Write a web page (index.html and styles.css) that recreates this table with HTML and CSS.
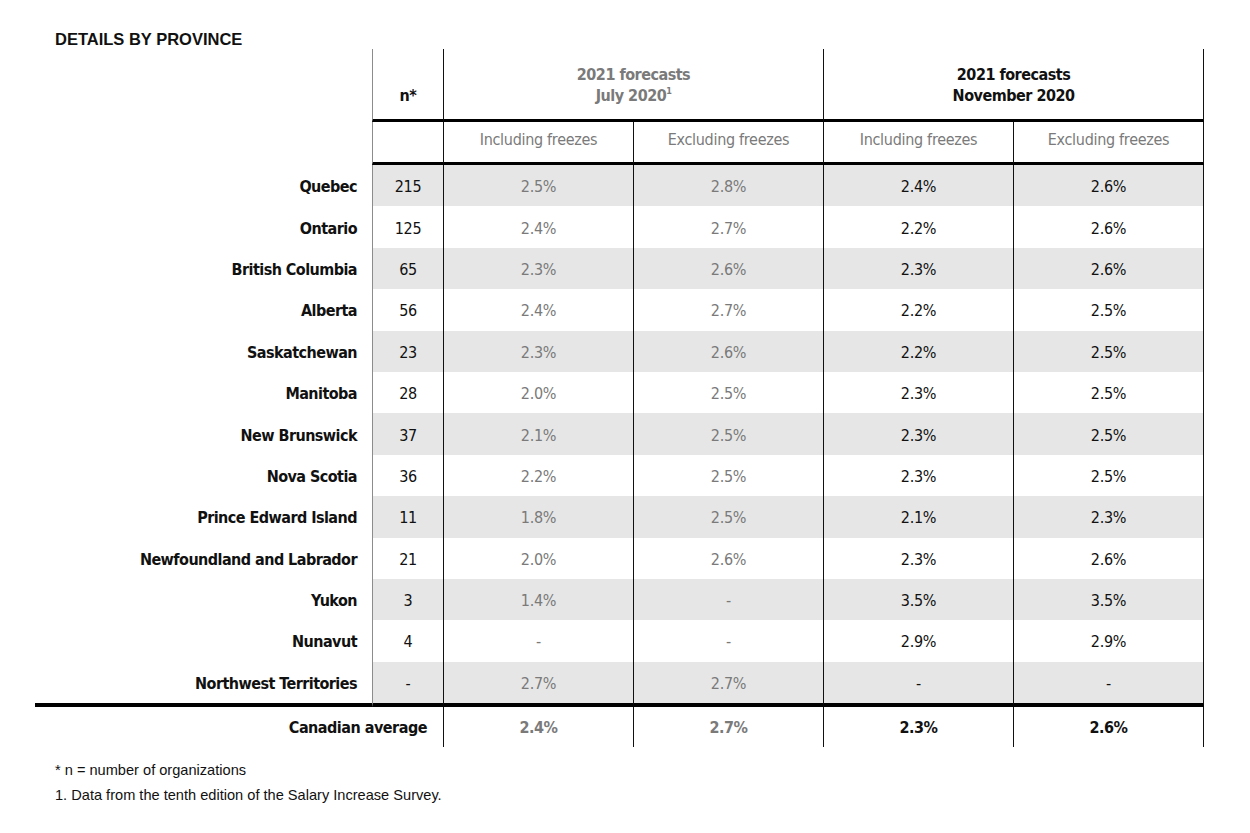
FILE: index.html
```html
<!DOCTYPE html>
<html lang="en">
<head>
<meta charset="utf-8">
<title>Details by province</title>
<link rel="stylesheet" href="styles.css">
</head>
<body>
<main class="page">
  <h1 class="title">DETAILS BY PROVINCE</h1>
  <table class="prov">
    <colgroup>
      <col class="c-label">
      <col class="c-n">
      <col class="c-val">
      <col class="c-val">
      <col class="c-val">
      <col class="c-val c-last">
    </colgroup>
    <thead>
      <tr class="h1">
        <th class="lbl"></th>
        <th class="n">n*</th>
        <th class="grp muted" colspan="2">2021 forecasts<br>July 2020<sup>1</sup></th>
        <th class="grp dark last" colspan="2">2021 forecasts<br>November 2020</th>
      </tr>
      <tr class="h2">
        <th class="lbl"></th>
        <th class="n"></th>
        <th class="sub">Including freezes</th>
        <th class="sub">Excluding freezes</th>
        <th class="sub">Including freezes</th>
        <th class="sub last">Excluding freezes</th>
      </tr>
    </thead>
    <tbody>
      <tr class="alt"><th class="lbl">Quebec</th><td class="n">215</td><td class="v muted">2.5%</td><td class="v muted">2.8%</td><td class="v">2.4%</td><td class="v last">2.6%</td></tr>
      <tr><th class="lbl">Ontario</th><td class="n">125</td><td class="v muted">2.4%</td><td class="v muted">2.7%</td><td class="v">2.2%</td><td class="v last">2.6%</td></tr>
      <tr class="alt"><th class="lbl">British Columbia</th><td class="n">65</td><td class="v muted">2.3%</td><td class="v muted">2.6%</td><td class="v">2.3%</td><td class="v last">2.6%</td></tr>
      <tr><th class="lbl">Alberta</th><td class="n">56</td><td class="v muted">2.4%</td><td class="v muted">2.7%</td><td class="v">2.2%</td><td class="v last">2.5%</td></tr>
      <tr class="alt"><th class="lbl">Saskatchewan</th><td class="n">23</td><td class="v muted">2.3%</td><td class="v muted">2.6%</td><td class="v">2.2%</td><td class="v last">2.5%</td></tr>
      <tr><th class="lbl">Manitoba</th><td class="n">28</td><td class="v muted">2.0%</td><td class="v muted">2.5%</td><td class="v">2.3%</td><td class="v last">2.5%</td></tr>
      <tr class="alt"><th class="lbl">New Brunswick</th><td class="n">37</td><td class="v muted">2.1%</td><td class="v muted">2.5%</td><td class="v">2.3%</td><td class="v last">2.5%</td></tr>
      <tr><th class="lbl">Nova Scotia</th><td class="n">36</td><td class="v muted">2.2%</td><td class="v muted">2.5%</td><td class="v">2.3%</td><td class="v last">2.5%</td></tr>
      <tr class="alt"><th class="lbl">Prince Edward Island</th><td class="n">11</td><td class="v muted">1.8%</td><td class="v muted">2.5%</td><td class="v">2.1%</td><td class="v last">2.3%</td></tr>
      <tr><th class="lbl">Newfoundland and Labrador</th><td class="n">21</td><td class="v muted">2.0%</td><td class="v muted">2.6%</td><td class="v">2.3%</td><td class="v last">2.6%</td></tr>
      <tr class="alt"><th class="lbl">Yukon</th><td class="n">3</td><td class="v muted">1.4%</td><td class="v muted">-</td><td class="v">3.5%</td><td class="v last">3.5%</td></tr>
      <tr><th class="lbl">Nunavut</th><td class="n">4</td><td class="v muted">-</td><td class="v muted">-</td><td class="v">2.9%</td><td class="v last">2.9%</td></tr>
      <tr class="alt end"><th class="lbl">Northwest Territories</th><td class="n">-</td><td class="v muted">2.7%</td><td class="v muted">2.7%</td><td class="v">-</td><td class="v last">-</td></tr>
    </tbody>
    <tfoot>
      <tr class="avg">
        <th class="avg-lbl" colspan="2">Canadian average</th>
        <td class="v muted">2.4%</td>
        <td class="v muted">2.7%</td>
        <td class="v">2.3%</td>
        <td class="v last">2.6%</td>
      </tr>
    </tfoot>
  </table>
  <div class="notes">
    <p class="note">* n = number of organizations</p>
    <p class="note">1. Data from the tenth edition of the Salary Increase Survey.</p>
  </div>
</main>
</body>
</html>
```

FILE: styles.css
```css
* { box-sizing: border-box; }

html, body {
  margin: 0;
  padding: 0;
  background: #ffffff;
}

.page {
  width: 1250px;
  height: 833px;
  padding: 30px 0 0 35px;
  font-family: "Liberation Sans", Arial, sans-serif;
  color: #111111;
}

.title {
  margin: 0 0 0 20px;
  font-size: 16.5px;
  line-height: 18px;
  font-weight: 700;
  color: #111111;
}

.prov {
  margin-top: 1px;
  width: 1169px;
  table-layout: fixed;
  border-collapse: separate;
  border-spacing: 0;
  font-family: "Liberation Sans Narrow", "DejaVu Sans Condensed", "Liberation Sans", sans-serif;
  font-size: 16px;
  line-height: 21px;
  letter-spacing: -0.3px;
}

.c-label { width: 337px; }
.c-n { width: 71px; }
.c-val { width: 190px; }
.c-last { width: 191px; }

.prov th,
.prov td {
  padding: 0;
  text-align: center;
  font-weight: 400;
  color: #111111;
}

.prov .n {
  border-left: 1px solid #8c8c8c;
}

.prov .grp,
.prov .sub,
.prov .v {
  border-left: 1px solid #111111;
}

.prov .last {
  border-right: 1px solid #111111;
}

/* header row 1 */
.h1 { height: 73px; }
.h1 th {
  vertical-align: bottom;
  padding-bottom: 13px;
}
.h1 .n,
.h1 .grp {
  border-bottom: 3px solid #000000;
}
.prov .h1 .n {
  font-weight: 700;
  letter-spacing: -0.5px;
}
.prov .grp {
  font-weight: 700;
  letter-spacing: -0.5px;
}
.grp sup {
  font-size: 9px;
  line-height: 0;
  vertical-align: 7px;
}

/* header row 2 */
.h2 { height: 43px; }
.h2 th {
  vertical-align: middle;
  padding-bottom: 6px;
}
.h2 .n,
.h2 .sub {
  border-bottom: 3px solid #000000;
}
.prov .sub {
  color: #7a7a7a;
}

/* data rows */
.prov tbody tr { height: 41.4px; }
.prov tbody tr.end { height: 45.4px; }
.prov tbody td,
.prov tbody th {
  vertical-align: middle;
  padding-top: 2px;
}

.prov tbody tr.alt td {
  background: #e6e6e6;
}

.prov .lbl {
  text-align: right;
  padding-right: 15px;
  font-weight: 700;
  letter-spacing: -0.55px;
  color: #111111;
}

.prov .muted {
  color: #7a7a7a;
}
.prov .dark {
  color: #111111;
}

.prov tr.end th,
.prov tr.end td {
  border-bottom: 4px solid #000000;
}

/* average row */
.avg { height: 40px; }
.prov .avg th,
.prov .avg td {
  font-weight: 700;
  letter-spacing: -0.5px;
  vertical-align: middle;
  padding-top: 1px;
}
.prov .avg-lbl {
  text-align: right;
  padding-right: 16px;
}

/* notes */
.notes {
  margin: 11px 0 0 20px;
  font-size: 14.6px;
  line-height: 25px;
  color: #111111;
}
.note {
  margin: 0;
}
```
